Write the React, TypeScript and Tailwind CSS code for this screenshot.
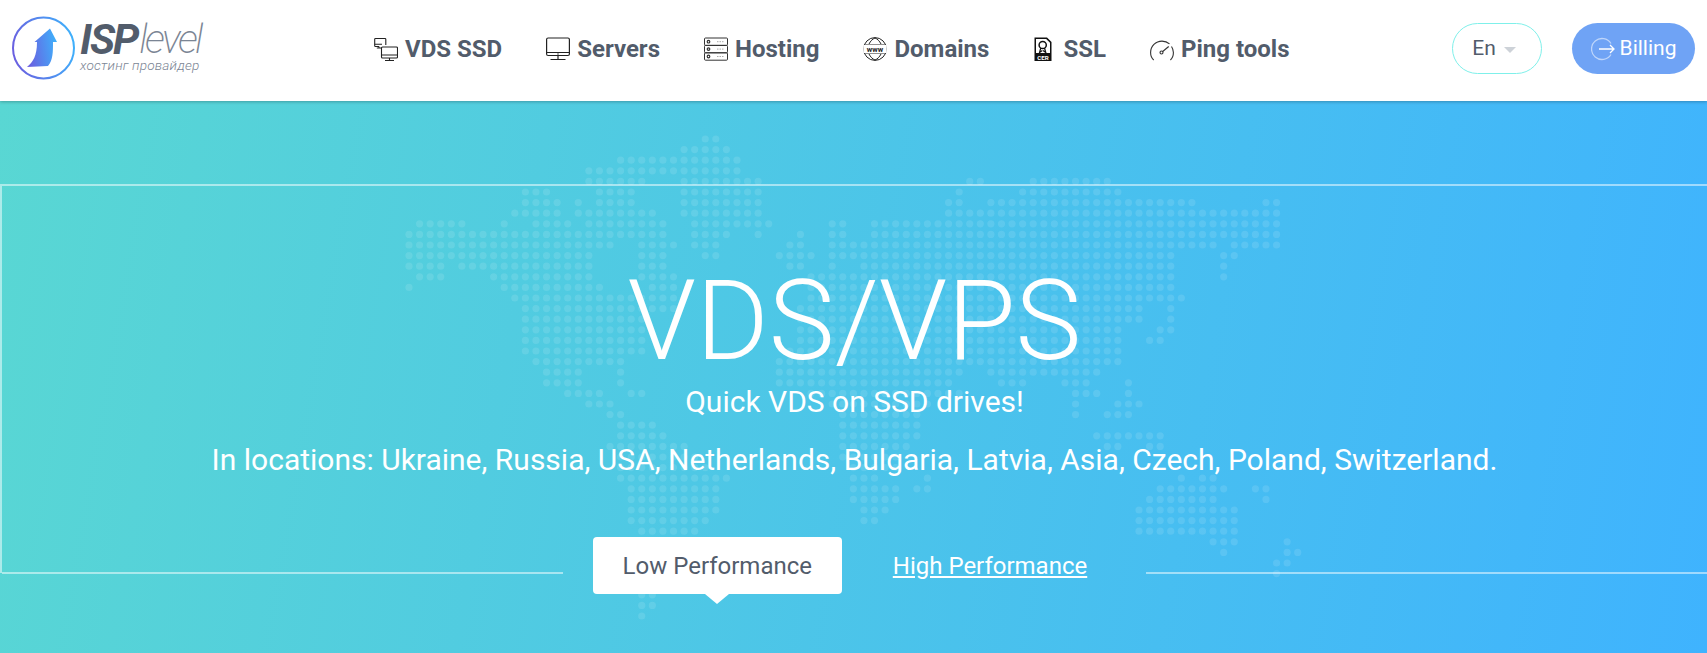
import type { ReactNode } from "react";

// world map: per row "from-to" column ranges
const MAP_ROWS: string[] = [
  "28-29",
  "26-30",
  "20-31",
  "17-31",
  "17-22,26-33,53-54,59-66",
  "11-13,18-21,26-33,52,58-67",
  "11-14,16,18-21,26-33,51-52,55-74,81-82",
  "10-14,16-23,26-33,51-82",
  "1-5,9,12-15,17-24,27-34,40-41,44-82",
  "0-24,27-30,33,37,40-41,44-82",
  "0-19,22-25,27-29,36-37,40-76,78-82",
  "0-17,22-24,28-29,35-38,40-72,77-78",
  "0-3,5-17,22-24,36-37,40,43-72,77",
  "1-3,8-17,22-25,38-72,77",
  "0,9-18,23-25,38-72",
  "10-25,38-73",
  "11-25,37-69,72",
  "11-22,37-69,72",
  "11-22,37-67,71-72",
  "11-22,37-67,70-71",
  "11-22,36-67",
  "12-20,35-67",
  "13-16,20,35-52,55-65",
  "13-16,20,35-51,56-58,62-64,68",
  "15-18,21-22,38-52,63-65,68",
  "17-19,40-49,63,67-69",
  "19-20,41-48,63,66-68",
  "20-23,41-48",
  "20-24,41-48,65-71",
  "19-26,41-47,66-67,70-71",
  "20-27,41-46",
  "20-28,42-46",
  "20-30,42-44,49,73,75-76",
  "21-29,42-46,48-49,71-77,80-81",
  "21-29,42-46,70-76,81",
  "21-29,43-45,69-78",
  "21-28,43-44,69-78",
  "22-27,69-78",
  "22-26,76-78,83",
  "22-26,77,83-84",
  "22-26,82-83",
  "22-25,82",
  "22-25",
  "22-23",
  "22-23",
  "22",
];

function WorldDots() {
  const dots: { x: number; y: number }[] = [];
  MAP_ROWS.forEach((row, r) => {
    row.split(",").forEach((range) => {
      const [from, to] = range.split("-").map(Number);
      for (let c = from; c <= (to ?? from); c++) {
        dots.push({ x: 4 + c * 10.58, y: 4 + r * 10.6 });
      }
    });
  });
  return (
    <svg
      className="pointer-events-none absolute left-[405px] top-[34px]"
      width="910"
      height="500"
      viewBox="0 0 910 500"
    >
      {dots.map((d, i) => (
        <circle key={i} cx={d.x} cy={d.y} r="3.6" fill="#fff" fillOpacity="0.11" />
      ))}
    </svg>
  );
}

function Logo() {
  return (
    <a href="#" className="flex items-center">
      <svg width="63" height="64" viewBox="0 0 63 64" className="shrink-0">
        <defs>
          <linearGradient id="logoGrad" x1="0" y1="0.6" x2="1" y2="0.4">
            <stop offset="0" stopColor="#6a5fe0" />
            <stop offset="1" stopColor="#3fb0fb" />
          </linearGradient>
        </defs>
        <circle cx="31.5" cy="32" r="30.500" fill="none" stroke="url(#logoGrad)" strokeWidth="2" />
        <path
          d="M38 12.500 L45 26 L41 26 C41 36 41 44 36 50 L15 51 C21 46 25 40 25 26 L22.500 26 Z"
          fill="url(#logoGrad)"
        />
      </svg>
      <div className="ml-[5px] flex flex-col italic">
        <div className="flex h-[34px] items-center text-[42px] leading-[34px] tracking-[-2px]">
          <span className="font-bold text-[#525c6b]">ISP</span>
          <span className="ml-[2px] text-[40px] font-extralight tracking-[-2.500px] text-[#7b8594]">level</span>
        </div>
        <span className="text-[13.600px] font-light leading-[16px] tracking-[0.2px] text-[#7b8594]">
          хостинг провайдер
        </span>
      </div>
    </a>
  );
}

const VdsIcon = (
  <svg width="24" height="24" viewBox="0 0 24 24" fill="none" stroke="#222" strokeWidth="1.100">
    <path d="M5 9.500H1.500a.8.8 0 0 1-.8-.8V2.300a.8.8 0 0 1 .8-.8h9.500a.8.8 0 0 1 .8.8V8" />
    <path d="M.7 7.300H8M5 9.500v1.500M2.800 11H8" />
    <rect x="7.500" y="10" width="16" height="11" rx="1" />
    <path d="M7.500 18h16M15.500 21v2.500M11 23.500h9" />
  </svg>
);

const ServerIcon = (
  <svg width="24" height="24" viewBox="0 0 24 24" fill="none" stroke="#222" strokeWidth="1.200">
    <rect x="0.600" y="1" width="22.800" height="17.500" rx="1.500" />
    <path d="M.6 15.500h22.800M12 18.500v3.500M4.500 22.500h15" />
    <path d="M12 16.500v1" strokeWidth="1.500" />
  </svg>
);

const HostingIcon = (
  <svg width="24" height="24" viewBox="0 0 24 24" fill="none" stroke="#333" strokeWidth="1">
    <rect x="0.500" y="1" width="23" height="7.400" rx="1" />
    <rect x="0.500" y="8.400" width="23" height="7.400" rx="1" />
    <rect x="0.500" y="15.800" width="23" height="7.400" rx="1" />
    <circle cx="4.500" cy="4.700" r="1.300" strokeWidth="1.200" />
    <circle cx="4.500" cy="12.100" r="1.300" strokeWidth="1.200" />
    <circle cx="4.500" cy="19.500" r="1.300" strokeWidth="1.200" />
    <path d="M13 4.700h7M13 12.100h7M13 19.500h7" stroke="#aaa" strokeDasharray="1.500 1" />
  </svg>
);

const WwwIcon = (
  <svg width="24" height="24" viewBox="0 0 24 24" fill="none" stroke="#222" strokeWidth="1">
    <circle cx="12" cy="12" r="11.400" />
    <path d="M1 8h22M1 16h22M6 7c1.500-3 3.500-5 6-6 2.500 1 4.500 3 6 6M6 17c1.500 3 3.500 5 6 6 2.500-1 4.500-3 6-6" />
    <rect x="0.300" y="8" width="23.400" height="8" fill="#fff" stroke="none" />
    <text x="12" y="14.600" textAnchor="middle" fontSize="7.400" fontWeight="700" fontFamily="Roboto, sans-serif" fill="#222" stroke="none">
      www
    </text>
  </svg>
);

const SslIcon = (
  <svg width="22" height="24" viewBox="2 0 22 24">
    <path d="M3.500 0.500h12.500l4.500 4.500V24h-17z" fill="#111" />
    <path d="M5 2h10.200l3.800 3.800V16H5z" fill="#fff" />
    <circle cx="11.700" cy="8" r="3.600" fill="none" stroke="#111" strokeWidth="1.500" />
    <path d="M9.800 11l-1.300 4.500 2.800-1.900M13.500 11l1.300 4.500-2.800-1.900" fill="none" stroke="#111" strokeWidth="1.200" />
    <text x="12" y="22.700" textAnchor="middle" fontSize="6.200" fontWeight="700" fontFamily="Roboto, sans-serif" fill="#fff">
      CER
    </text>
  </svg>
);

const PingIcon = (
  <svg width="24" height="24" viewBox="0 0 24 24" fill="none" stroke="#333" strokeWidth="1.100">
    <path d="M3.700 23C.8 20.500.6 17 .6 15.500A11.400 11.400 0 0 1 12 4.100c3 0 5.500 1 7.500 2.800" />
    <path d="M21.500 9.500a11.400 11.400 0 0 1 1.900 6c0 2.500-.8 5.500-3 7.500" />
    <circle cx="11.500" cy="15.500" r="1.500" />
    <path d="M12.700 14.500l6-5" />
  </svg>
);

const NAV_ITEMS: { label: string; icon: ReactNode; gap: string }[] = [
  { label: "VDS SSD", icon: VdsIcon, gap: "gap-[7px]" },
  { label: "Servers", icon: ServerIcon, gap: "gap-[7px]" },
  { label: "Hosting", icon: HostingIcon, gap: "gap-[7px]" },
  { label: "Domains", icon: WwwIcon, gap: "gap-[7px]" },
  { label: "SSL", icon: SslIcon, gap: "gap-[8px]" },
  { label: "Ping tools", icon: PingIcon, gap: "gap-[7px]" },
];

function Header() {
  return (
    <header className="relative z-10 flex h-[101px] items-center bg-white pb-[5px] pl-[12px] pr-[12px] shadow-[0_1px_3px_rgba(0,0,0,0.25)]">
      <div className="w-[362px] shrink-0">
        <Logo />
      </div>
      <nav className="mt-[2px] flex items-center gap-[44px]">
        {NAV_ITEMS.map((item) => (
          <a key={item.label} href="#" className={`flex items-center text-[24px] font-bold text-[#525c6b] ${item.gap}`}>
            {item.icon}
            <span>{item.label}</span>
          </a>
        ))}
      </nav>
      <div className="ml-auto flex items-center gap-[30px]">
        <button className="flex h-[51px] w-[90px] items-center justify-center gap-[8px] rounded-full border border-[#7ff0ea] bg-white pr-[6px] pt-[1px] text-[21px] text-[#525c6b]">
          En
          <span className="mt-[2px] h-0 w-0 border-x-[6px] border-t-[6px] border-x-transparent border-t-[#cdd2d8]" />
        </button>
        <button className="flex h-[51px] w-[123px] items-center justify-center gap-[5px] rounded-full bg-[#6fa3f5] pt-[1px] text-[21px] text-white">
          <svg width="24" height="24" viewBox="0 0 24 24" fill="none" stroke="#fff" strokeWidth="1.300">
            <path d="M20 6.500A10.500 10.500 0 1 0 20 17.500" strokeOpacity="0.55" />
            <path d="M8 12h15M19 8l4 4-4 4" />
          </svg>
          Billing
        </button>
      </div>
    </header>
  );
}

function Hero() {
  return (
    <section className="relative h-[552px] overflow-hidden bg-[linear-gradient(100deg,#59d7d3,#3fb3fe)] pt-[83px] text-white">
      <WorldDots />
      <div className="relative flex h-[389px] flex-col items-center border-l-2 border-t-2 border-white/50 pt-[79px]">
        <h1 className="text-[111px] font-light leading-[112px]">VDS/VPS</h1>
        <p className="mt-[7px] text-[30px] leading-[36px]">Quick VDS on SSD drives!</p>
        <p className="mt-[22px] text-[30px] leading-[36px]">
          In locations: Ukraine, Russia, USA, Netherlands, Bulgaria, Latvia, Asia, Czech, Poland, Switzerland.
        </p>
        <div className="mt-auto -mb-[21px] flex h-[57px] w-full items-start">
          <div className="mt-[35px] h-0.5 flex-1 bg-white/50" />
          <div className="relative ml-[30px] flex h-[57px] w-[249px] items-center justify-center rounded bg-white text-[24px] text-[#525c6b]">
            Low Performance
            <span className="absolute left-1/2 top-full h-0 w-0 -translate-x-1/2 border-x-[12px] border-t-[10px] border-x-transparent border-t-white" />
          </div>
          <a href="#" className="ml-[51px] mr-[59px] flex h-[57px] items-center text-[24px] underline underline-offset-2">
            High Performance
          </a>
          <div className="mt-[35px] h-0.5 flex-1 bg-white/50" />
        </div>
      </div>
    </section>
  );
}

export default function App() {
  return (
    <div className="h-[653px] w-full overflow-hidden font-['Roboto',sans-serif]">
      <Header />
      <Hero />
    </div>
  );
}
